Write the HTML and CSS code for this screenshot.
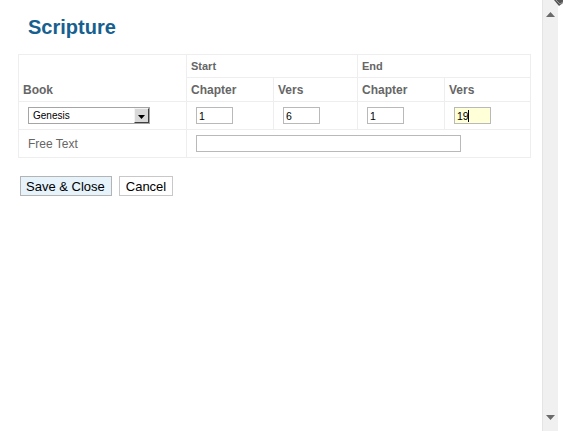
FILE: index.html
```html
<!DOCTYPE html>
<html>
<head>
<meta charset="utf-8">
<link rel="stylesheet" href="styles.css">
</head>
<body>
<div class="page">
  <div class="main">
    <h1 class="title">Scripture</h1>
    <table class="grid">
      <colgroup>
        <col class="c-book"><col class="c-a"><col class="c-b"><col class="c-a"><col class="c-d">
      </colgroup>
      <tr class="r1">
        <td rowspan="2" class="hd-book">Book</td>
        <td colspan="2" class="hd-small">Start</td>
        <td colspan="2" class="hd-small">End</td>
      </tr>
      <tr class="r2">
        <td class="hd">Chapter</td>
        <td class="hd">Vers</td>
        <td class="hd">Chapter</td>
        <td class="hd">Vers</td>
      </tr>
      <tr class="r3">
        <td class="in-cell">
          <div class="select"><span class="sel-text">Genesis</span><span class="sel-btn"><svg width="7" height="4" viewBox="0 0 7 4"><path d="M0 0h7L3.5 4z" fill="#000"/></svg></span></div>
        </td>
        <td class="in-cell"><input class="num" type="text" value="1"></td>
        <td class="in-cell"><input class="num" type="text" value="6"></td>
        <td class="in-cell"><input class="num" type="text" value="1"></td>
        <td class="in-cell"><span class="focus-wrap"><input class="num active" type="text" value="19"><span class="caret"></span></span></td>
      </tr>
      <tr class="r4">
        <td class="free-label">Free Text</td>
        <td colspan="4" class="in-cell"><input class="free" type="text" value=""></td>
      </tr>
    </table>
    <div class="actions">
      <button class="btn primary" type="button">Save &amp; Close</button>
      <button class="btn" type="button">Cancel</button>
    </div>
  </div>
  <div class="scrollbar">
    <svg class="arrow" width="9" height="5" viewBox="0 0 9 5"><path d="M4.5 0L9 5H0z" fill="#6a6a6a"/></svg>
    <svg class="arrow" width="9" height="5" viewBox="0 0 9 5"><path d="M0 0h9L4.5 5z" fill="#6a6a6a"/></svg>
  </div>
  <div class="edge">
    <svg class="corner" width="10" height="8" viewBox="0 0 10 8"><path d="M1 0 L6 6 L10 3 L10 0 Z" fill="#555"/><path d="M3 0 L7 4 L10 2" stroke="#999" fill="none"/></svg>
  </div>
</div>
</body>
</html>
```
FILE: styles.css
```css
html, body {
  margin: 0;
  padding: 0;
  background: #fff;
}
body {
  font-family: "Liberation Sans", Arial, sans-serif;
  width: 563px;
  height: 431px;
  overflow: hidden;
}
.page {
  display: flex;
  height: 431px;
  position: relative;
}
.main {
  width: 542px;
  padding: 16px 0 0 18px;
  box-sizing: border-box;
}
.title {
  margin: 0 0 15px 10px;
  font-size: 20px;
  line-height: 23px;
  font-weight: bold;
  color: #16608f;
}
.grid {
  border-collapse: collapse;
  table-layout: fixed;
  width: 512px;
  border: 1px solid #eeeeee;
}
.c-book { width: 168px; }
.c-a { width: 87px; }
.c-b { width: 84px; }
.c-d { width: 86px; }
.grid td {
  border: 1px solid #eeeeee;
  padding: 0 0 0 4px;
  vertical-align: middle;
  color: #666;
}
.r1 { height: 23px; }
.r2 { height: 24px; }
.r3 { height: 28px; }
.r4 { height: 28px; }
.hd-small {
  font-size: 11px;
  font-weight: bold;
}
.hd-book {
  font-size: 12px;
  font-weight: bold;
  vertical-align: bottom !important;
  padding-bottom: 4px !important;
}
.hd {
  font-size: 12px;
  font-weight: bold;
}
.grid td.in-cell {
  padding-left: 9px;
  font-size: 0;
}
.grid td.free-label {
  padding-left: 9px;
  font-size: 12px;
  color: #666;
}
.select {
  display: flex;
  align-items: stretch;
  width: 122px;
  height: 17px;
  box-sizing: border-box;
  border: 1px solid #a5a5a5;
  background: #fff;
}
.sel-text {
  flex: 1;
  font-size: 10px;
  line-height: 15px;
  color: #000;
  padding-left: 4px;
}
.sel-btn {
  width: 15px;
  box-sizing: border-box;
  margin: 0;
  background: #d9d9d9;
  border-top: 1px solid #f4f4f4;
  border-left: 1px solid #f4f4f4;
  border-right: 1px solid #404040;
  border-bottom: 1px solid #404040;
  display: flex;
  align-items: flex-end;
  justify-content: center;
  padding-bottom: 3px;
}
.num {
  width: 37px;
  height: 17px;
  box-sizing: border-box;
  border: 1px solid #b9b9b9;
  padding: 0 2px;
  margin: 0;
  font-family: "Liberation Sans", Arial, sans-serif;
  font-size: 10.5px;
  color: #000;
  background: #fff;
  outline: none;
}
.num.active {
  background: #ffffd8;
}
.focus-wrap {
  position: relative;
  display: inline-block;
}
.caret {
  position: absolute;
  left: 14px;
  top: 3px;
  width: 1px;
  height: 12px;
  background: #000;
}
.free {
  width: 265px;
  height: 17px;
  box-sizing: border-box;
  border: 1px solid #b9b9b9;
  margin: 0;
  padding: 0;
  background: #fff;
  outline: none;
}
.actions {
  display: flex;
  gap: 7px;
  margin: 18px 0 0 2px;
}
.btn {
  height: 20px;
  box-sizing: border-box;
  border: 1px solid #c8c8c8;
  background: #fff;
  font-family: "Liberation Sans", Arial, sans-serif;
  font-size: 13px;
  line-height: 17px;
  color: #000;
  padding: 0 6px;
  margin: 0;
  border-radius: 0;
}
.btn.primary {
  background: #e6f3fb;
  border-color: #b4b4b4;
  padding: 0 6px 0 5px;
}
.scrollbar {
  width: 16px;
  background: #f0f0f0;
  border-left: 1px solid #e4e4e4;
  box-sizing: border-box;
  display: flex;
  flex-direction: column;
  justify-content: space-between;
  align-items: center;
  padding: 12px 0 11px;
}
.edge {
  flex: 1;
  position: relative;
}
.corner {
  position: absolute;
  top: 0;
  right: 0;
}
```
